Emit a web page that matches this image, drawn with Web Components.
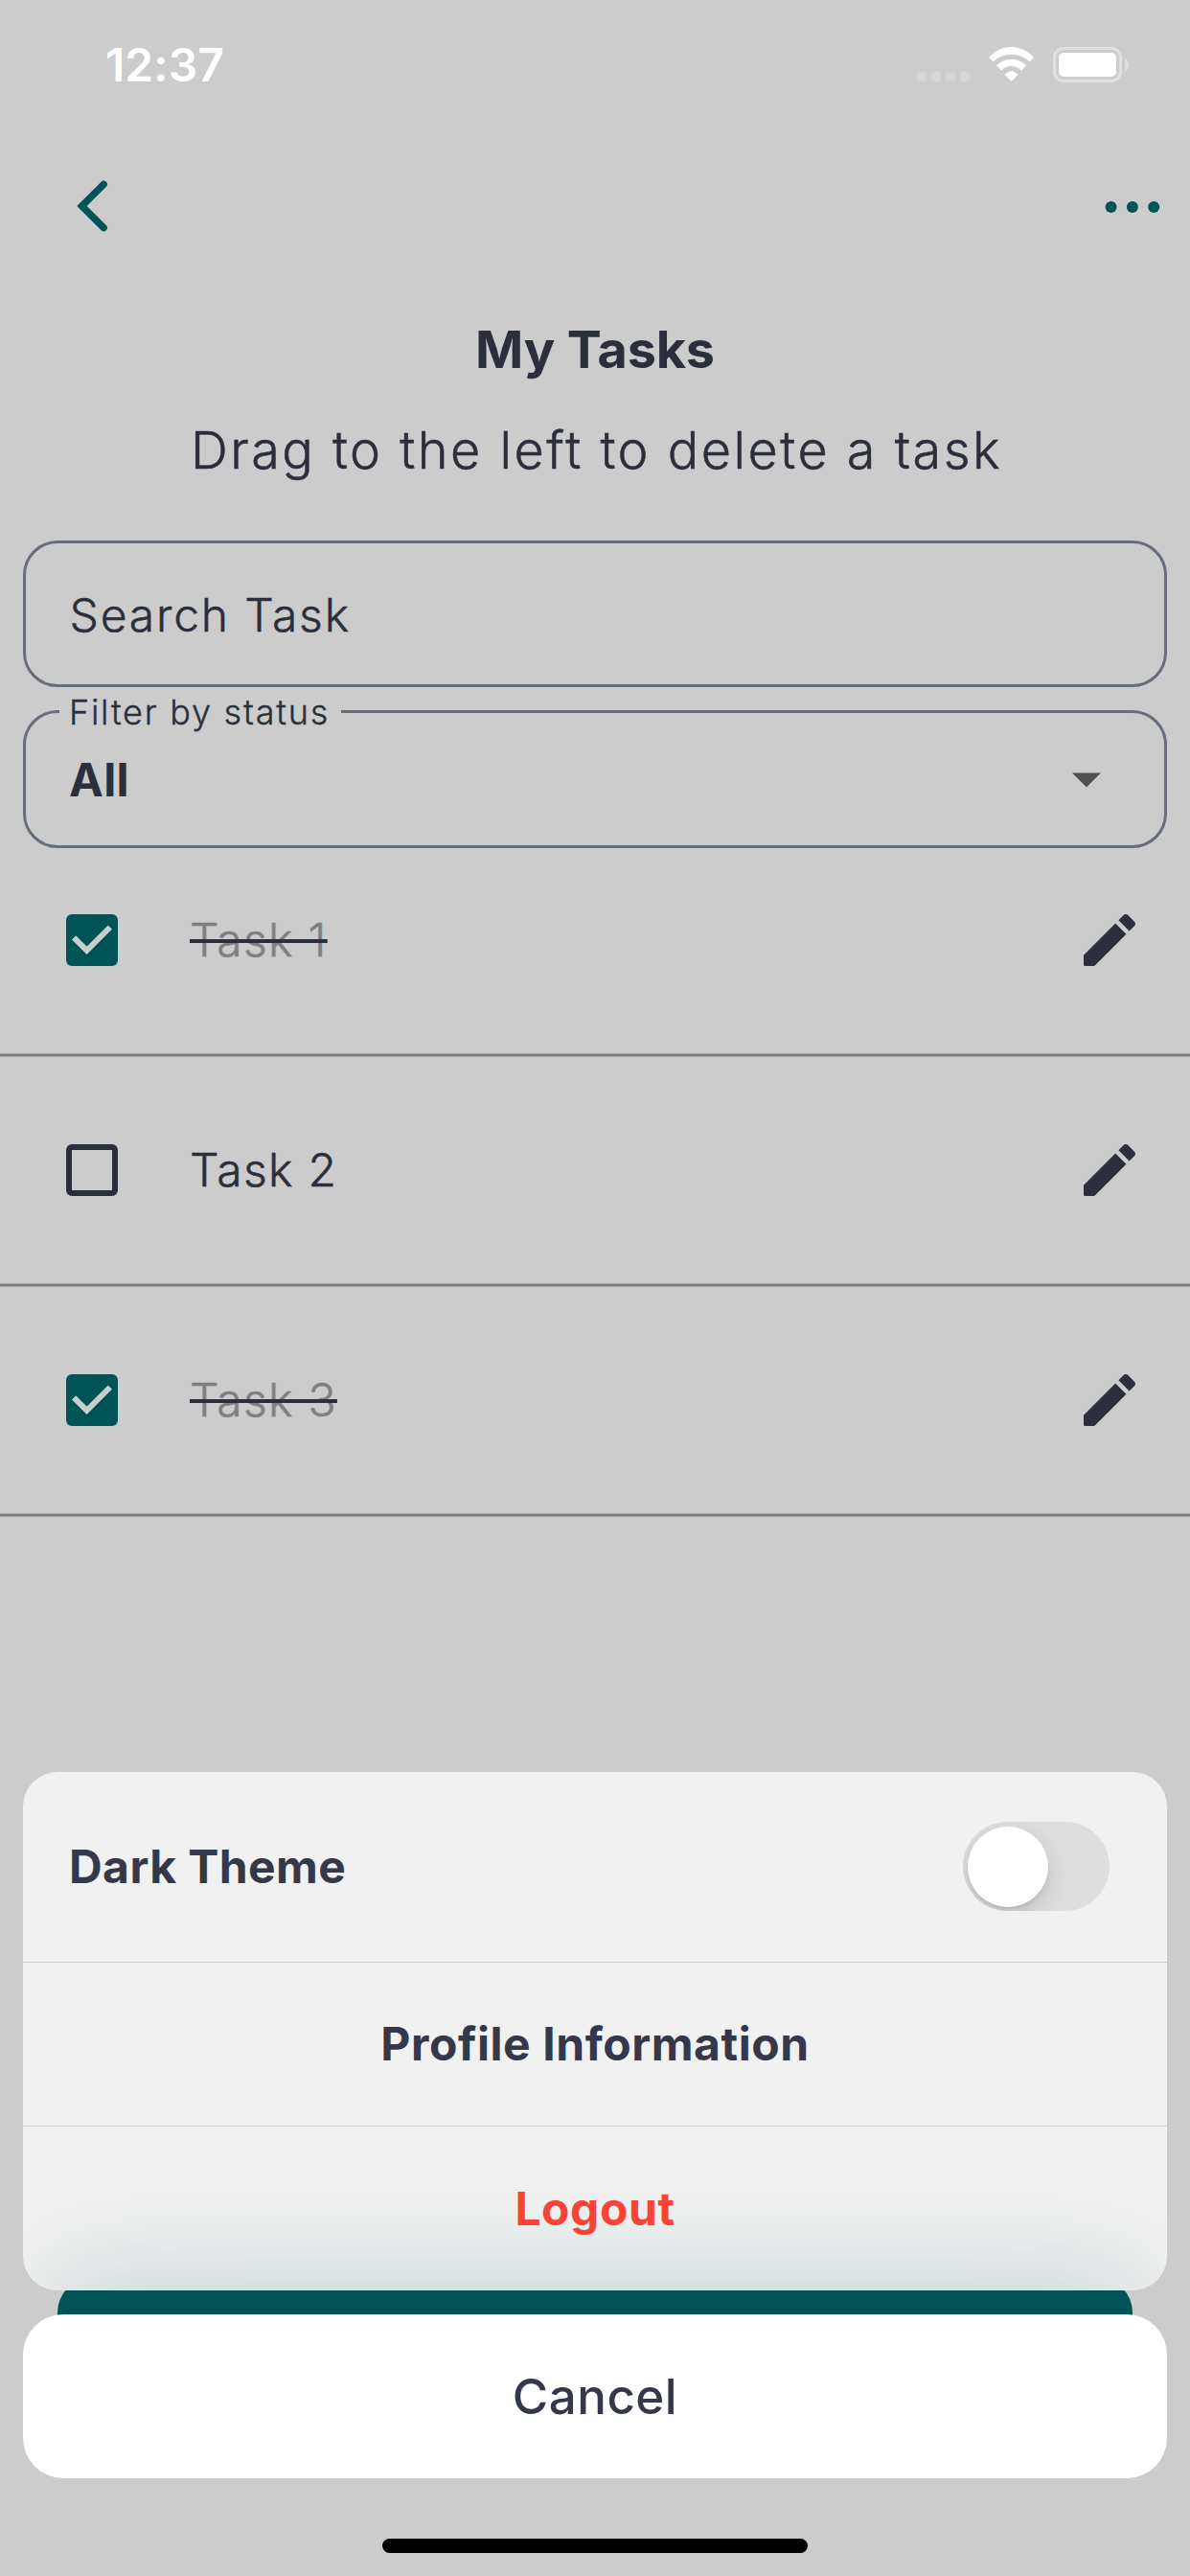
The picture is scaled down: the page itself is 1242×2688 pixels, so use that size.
<!DOCTYPE html>
<html lang="en">
<head>
<meta charset="utf-8">
<title>My Tasks</title>
<style>
  html, body { margin: 0; padding: 0; background: #cccccc; }
  body { font-family: Inter, "Liberation Sans", sans-serif; color: #2b2e3b; }
</style>
</head>
<body>
<phone-screen>
  <status-bar slot="page" time="12:37"></status-bar>
  <nav-bar slot="page"></nav-bar>
  <page-heading slot="page">My Tasks<span slot="hint">Drag to the left to delete a task</span></page-heading>
  <search-field slot="page">Search Task</search-field>
  <select-field slot="page" label="Filter by status">All</select-field>
  <task-list slot="page">
    <task-item done>Task 1</task-item>
    <task-item>Task 2</task-item>
    <task-item done>Task 3</task-item>
  </task-list>
  <primary-button slot="page"></primary-button>
  <action-sheet slot="overlay">
    <sheet-action class="tall" align="start">Dark Theme<toggle-switch slot="end"></toggle-switch></sheet-action>
    <sheet-action>Profile Information</sheet-action>
    <sheet-action danger>Logout</sheet-action>
    <span slot="cancel">Cancel</span>
  </action-sheet>
</phone-screen>

<script>
const define = (name, html, setup) => {
  const template = document.createElement('template');
  template.innerHTML = html;
  customElements.define(name, class extends HTMLElement {
    constructor() {
      super();
      this.attachShadow({ mode: 'open' }).append(template.content.cloneNode(true));
    }
    connectedCallback() {
      if (setup) setup(this, this.shadowRoot);
    }
  });
};

define('phone-screen', `
  <style>
    :host { display: grid; width: 1242px; height: 2688px; overflow: hidden; background: #cccccc; }
    .layer { grid-area: 1 / 1; display: flex; flex-direction: column; min-width: 0; min-height: 0; height: 2688px; }
    .overlay { justify-content: flex-end; align-items: center; z-index: 1; }
    .home { width: 444px; height: 15px; border-radius: 7.5px; background: #000; margin: 63px 0 24px; }
  </style>
  <div class="layer"><slot name="page"></slot></div>
  <div class="layer overlay"><slot name="overlay"></slot><div class="home"></div></div>
`);

define('status-bar', `
  <style>
    :host { display: flex; align-items: center; justify-content: space-between; height: 136px; padding: 0 64px 0 110px; box-sizing: border-box; color: #fff; }
    .time { font-size: 48px; font-weight: 600; line-height: 58px; letter-spacing: 0.06px; }
    svg { display: block; }
  </style>
  <span class="time"></span>
  <svg width="221" height="38" viewBox="957 49 221 38">
    <g fill="#d6d6d6">
      <rect x="957" y="75" width="10" height="10" rx="3"/><rect x="972" y="75" width="10" height="10" rx="3"/>
      <rect x="987" y="75" width="10" height="10" rx="3"/><rect x="1002" y="75" width="10" height="10" rx="3"/>
    </g>
    <g fill="#fff" stroke="#fff" stroke-width="1" stroke-linejoin="round">
      <path d="M1032.4 60A30.6 30.6 0 0 1 1078.6 60L1074.5 64A27.3 27.3 0 0 0 1036.5 64Z"/>
      <path d="M1040.5 68.3A21.8 21.8 0 0 1 1070.5 68.3L1066 73.1A14.5 14.5 0 0 0 1045 73.1Z"/>
      <path d="M1049.1 78A8 8 0 0 1 1061.9 78L1055.5 84.6Z"/>
    </g>
    <rect x="1100.5" y="50.5" width="69" height="34" rx="9.5" fill="none" stroke="#e0e0e0" stroke-width="3"/>
    <rect x="1105" y="55" width="60" height="25" rx="5" fill="#fff"/>
    <path d="M1174 61C1176.4 62 1178 64.6 1178 67.5S1176.4 73 1174 74Z" fill="#e0e0e0"/>
  </svg>
`, (el, root) => { root.querySelector('.time').textContent = el.getAttribute('time'); });

define('nav-bar', `
  <style>
    :host { display: flex; align-items: center; justify-content: space-between; height: 160px; padding: 0 30px 0 76px; box-sizing: border-box; }
    .back { margin-top: -3px; }
    svg { display: block; }
  </style>
  <svg class="back" width="40" height="60" viewBox="76 184.3 40 60" fill="none" stroke="#005457" stroke-width="7.4" stroke-linecap="round"><path d="M108.2 191.6L85.5 214.3L108.2 237"/></svg>
  <svg width="60" height="20" viewBox="1152 206 60 20" fill="#005457"><circle cx="1159.6" cy="216" r="6"/><circle cx="1181.9" cy="216" r="6"/><circle cx="1204.2" cy="216" r="6"/></svg>
`);

define('page-heading', `
  <style>
    :host { display: flex; flex-direction: column; align-items: center; gap: 38px; padding-top: 35px; height: 268px; box-sizing: border-box; text-align: center; }
    h1, p { margin: 0; font-size: 54px; line-height: 67px; white-space: nowrap; }
    h1 { font-weight: 700; letter-spacing: -0.2px; }
    p { font-weight: 300; letter-spacing: 2.47px; padding-left: 3px; -webkit-text-stroke: 0.5px; }
  </style>
  <h1><slot></slot></h1>
  <p><slot name="hint"></slot></p>
`);

define('search-field', `
  <style>
    :host { display: flex; align-items: center; margin: 0 24px; height: 153px; padding: 2px 0 0 45.5px; box-sizing: border-box; border: 3px solid #666d7c; border-radius: 36px; font-size: 48px; font-weight: 300; letter-spacing: 1.8px; line-height: 58px; -webkit-text-stroke: 0.45px; }
  </style>
  <slot></slot>
`);

define('select-field', `
  <style>
    :host { display: flex; align-items: center; justify-content: space-between; position: relative; margin: 24px 24px 0; height: 144px; padding: 0 66px 0 45px; box-sizing: border-box; border: 3px solid #666d7c; border-radius: 36px; }
    .label { position: absolute; left: 34.5px; top: -23px; padding: 0 13.5px 0 10.5px; width: 294.5px; box-sizing: border-box; background: #cccccc; font-size: 36px; line-height: 44px; font-weight: 300; letter-spacing: 1.75px; white-space: nowrap; -webkit-text-stroke: 0.35px; }
    .value { padding-top: 1px; font-size: 48px; font-weight: 700; line-height: 58px; letter-spacing: 0.32px; }
    svg { display: block; }
  </style>
  <span class="label"></span>
  <span class="value"><slot></slot></span>
  <svg width="30" height="17" viewBox="0 0 30 17"><path d="M0 1.5H30L15 16.5Z" fill="#505050"/></svg>
`, (el, root) => { root.querySelector('.label').textContent = el.getAttribute('label'); });

define('task-list', `
  <style>:host { display: flex; flex-direction: column; margin-top: -22px; }</style>
  <slot></slot>
`);

define('task-item', `
  <style>
    :host { display: flex; flex-direction: column; }
    .row { display: flex; align-items: center; height: 236px; padding: 0 57px 0 69px; }
    .title { flex: 1; margin-left: 75px; font-size: 48px; font-weight: 300; line-height: 58px; letter-spacing: 1.3px; -webkit-text-stroke: 0.5px; }
    .rule { height: 4px; background: linear-gradient(#a6a6a6 1px, #7a7a7a 1px 3px, #a6a6a6 3px); }
    svg { display: block; }
    .on { display: none; }
    :host([done]) .on { display: block; }
    :host([done]) .off { display: none; }
    :host([done]) .title { color: #808080; }
    :host([done]) .title span { text-decoration: line-through #2b2e3b 3.6px; }
  </style>
  <div class="row">
    <svg width="54" height="54" viewBox="0 0 54 54">
      <g class="on"><rect width="54" height="54" rx="6" fill="#005457"/><path d="M8.1 24.3L21.6 37.8L45.9 13.5" fill="none" stroke="#cccccc" stroke-width="6"/></g>
      <path class="off" fill="#2b2e3b" fill-rule="evenodd" d="M6 0H48A6 6 0 0 1 54 6V48A6 6 0 0 1 48 54H6A6 6 0 0 1 0 48V6A6 6 0 0 1 6 0ZM6 6V48H48V6Z"/>
    </svg>
    <div class="title"><span><slot></slot></span></div>
    <svg width="54" height="54" viewBox="3 3 18 18" fill="#2b2e3b"><path d="M3 17.46v3.04c0 .28.22.5.5.5h3.04c.13 0 .26-.05.35-.15L17.81 9.94l-3.75-3.75L3.15 17.1c-.1.1-.15.22-.15.36zM20.71 7.04c.39-.39.39-1.02 0-1.41l-2.34-2.34c-.39-.39-1.02-.39-1.41 0l-1.83 1.83 3.75 3.75 1.83-1.83z"/></svg>
  </div>
  <div class="rule"></div>
`);

define('primary-button', `
  <style>:host { display: block; margin: auto 60px 146px; height: 165px; border-radius: 36px; background: #005457; }</style>
`);

define('action-sheet', `
  <style>
    :host { display: flex; flex-direction: column; gap: 25px; width: 1194px; }
    .group { display: flex; flex-direction: column; gap: 1px; height: 541px; border-radius: 36px; overflow: hidden; background: #f1f1f1; position: relative; isolation: isolate; color: #353849; }
    .glow { position: absolute; z-index: -1; left: 36px; right: 36px; top: 528px; height: 500px; background: #005457; opacity: 0.18; filter: blur(52px); }
    .cancel { display: flex; align-items: center; justify-content: center; height: 171px; border-radius: 42px; background: #fff; color: #353849; font-size: 51px; font-weight: 500; line-height: 62px; letter-spacing: 0.51px; }
  </style>
  <div class="group"><div class="glow"></div><slot></slot></div>
  <div class="cancel"><slot name="cancel"></slot></div>
`);

define('sheet-action', `
  <style>
    :host { display: flex; align-items: center; justify-content: center; height: 171px; box-sizing: border-box; font-size: 48px; font-weight: 700; line-height: 58px; letter-spacing: 0.56px; box-shadow: 0 1px 0 rgba(0,0,0,.13); }
    :host(.tall) { height: 198px; box-shadow: 0 1px 0 rgba(0,0,0,.17); }
    :host([align="start"]) { justify-content: space-between; padding: 0 60px 0 48px; letter-spacing: 0.44px; }
    :host([danger]) { color: #f94336; box-shadow: none; }
  </style>
  <slot></slot><slot name="end"></slot>
`);

define('toggle-switch', `
  <style>
    :host { display: block; width: 153px; height: 93px; padding: 4.5px; box-sizing: border-box; border-radius: 46.5px; background: #dedede; overflow: hidden; }
    .thumb { width: 84px; height: 84px; border-radius: 50%; background: #fff; box-shadow: 0 9px 24px rgba(0,0,0,.15), 0 3px 3px rgba(0,0,0,.06); }
  </style>
  <div class="thumb"></div>
`);
</script>
</body>
</html>
